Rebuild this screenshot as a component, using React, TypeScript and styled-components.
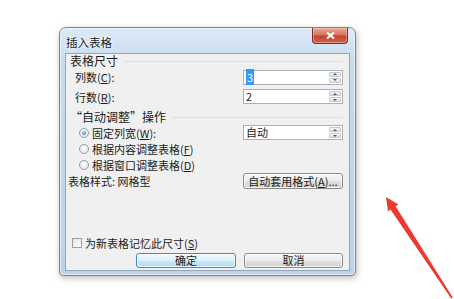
import React, { FC, ReactNode } from "react";
import styled, { createGlobalStyle } from "styled-components";

const GlobalStyle = createGlobalStyle`
  html, body {
    margin: 0;
    background: #fff;
  }
  body {
    font-family: "Noto Sans CJK SC", "Liberation Sans", sans-serif;
    font-size: 11px;
    color: #1c1c1c;
  }
`;

const Page = styled.div`
  position: relative;
  width: 454px;
  height: 299px;
  box-sizing: border-box;
  padding: 27px 0 0 59px;
  overflow: hidden;
`;

const Window = styled.div`
  width: 297px;
  height: 249px;
  box-sizing: border-box;
  display: flex;
  flex-direction: column;
  padding: 0 5px 4px;
  border: 1px solid #71859a;
  border-radius: 7px 7px 4px 4px;
  background: linear-gradient(180deg, #dceaf6 0%, #c6dcee 14%, #bad3e9 100%);
  box-shadow: inset 0 0 0 1px rgba(255, 255, 255, 0.6), 1px 2px 6px rgba(0, 0, 0, 0.28);
`;

const TitleBar = styled.div`
  flex: none;
  height: 25px;
  display: flex;
  justify-content: space-between;
  align-items: flex-start;
`;

const Title = styled.span`
  margin: 7px 0 0 1px;
  font-size: 11.5px;
  line-height: 14px;
  color: #222;
  text-shadow: 0 0 5px #fff, 0 0 3px #fff;
`;

const CloseButton = styled.div`
  width: 36px;
  height: 16px;
  margin-right: 2px;
  box-sizing: border-box;
  display: flex;
  align-items: center;
  justify-content: center;
  border: 1px solid #6e3028;
  border-top: none;
  border-radius: 0 0 4px 4px;
  background: linear-gradient(180deg, #e9a896 0%, #d7735f 45%, #c2452f 55%, #d2624a 100%);
  box-shadow: inset 0 0 0 1px rgba(255, 220, 200, 0.45);
`;

const Client = styled.div`
  flex: 1;
  display: flex;
  flex-direction: column;
  background: #f0f0f0;
  border: 1px solid #8fa8bf;
  padding: 1px 6px 2px 0;

  & > * {
    flex-shrink: 0;
  }
`;

const GroupTitle = styled.div<{ $mt?: number; $h?: number }>`
  display: flex;
  align-items: center;
  height: ${(p) => p.$h ?? 14}px;
  margin-top: ${(p) => p.$mt ?? 0}px;
  padding-left: 4px;
  font-size: 12px;
  line-height: 14px;
  white-space: nowrap;

  &::after {
    content: "";
    flex: 1;
    margin-left: 6px;
    border-top: 1px solid #d9e1e7;
  }
`;

const Row = styled.div<{ $mt?: number; $h?: number; $indent?: number }>`
  display: flex;
  align-items: center;
  justify-content: space-between;
  height: ${(p) => p.$h ?? 15}px;
  margin-top: ${(p) => p.$mt ?? 0}px;
  padding-left: ${(p) => p.$indent ?? 0}px;
  line-height: 14px;
  white-space: nowrap;
`;

const Label = styled.span`
  display: flex;
  align-items: center;
`;

const Acc = styled.span`
  text-decoration: underline;
`;

const Box = styled.div`
  width: 100px;
  height: 15px;
  box-sizing: border-box;
  display: flex;
  background: #fff;
  border: 1px solid #a9b0b8;
`;

const BoxText = styled.span`
  flex: 1;
  padding-left: 2px;
  line-height: 13px;
`;

const Selected = styled.span`
  background: #3399ff;
  color: #fff;
  padding: 0 1px;
`;

const Spin = styled.div`
  width: 12px;
  display: flex;
  flex-direction: column;
  gap: 1px;
  padding: 1px;
`;

const SpinHalf = styled.div<{ $down?: boolean }>`
  flex: 1;
  display: flex;
  align-items: center;
  justify-content: center;
  border: 1px solid #c4cad1;
  border-radius: 1px;
  background: linear-gradient(180deg, #f6f6f6, #dcdfe3);

  &::after {
    content: "";
    border-left: 2px solid transparent;
    border-right: 2px solid transparent;
    ${(p) => (p.$down ? "border-top: 2px solid #4d5966;" : "border-bottom: 2px solid #4d5966;")}
  }
`;

const Radio = styled.span<{ $checked?: boolean }>`
  width: 10px;
  height: 10px;
  box-sizing: border-box;
  margin-right: 3px;
  display: inline-flex;
  align-items: center;
  justify-content: center;
  border-radius: 50%;
  border: 1px solid #9a9fa6;
  background: radial-gradient(circle at 50% 40%, #ffffff, #dcdfe3);

  &::after {
    content: "";
    width: 4px;
    height: 4px;
    border-radius: 50%;
    background: ${(p) =>
      p.$checked ? "radial-gradient(circle at 40% 35%, #9ad8ff, #1f63b3)" : "transparent"};
  }
`;

const Check = styled.span`
  width: 10px;
  height: 10px;
  box-sizing: border-box;
  margin-right: 3px;
  border: 1px solid #9a9fa6;
  background: linear-gradient(135deg, #dfe2e6, #ffffff);
`;

const PushButton = styled.div<{ $w: number; $h?: number; $default?: boolean }>`
  width: ${(p) => p.$w}px;
  height: ${(p) => p.$h ?? 16}px;
  box-sizing: border-box;
  display: flex;
  align-items: center;
  justify-content: center;
  border: 1px solid ${(p) => (p.$default ? "#4c88b6" : "#8b8b8b")};
  border-radius: 3px;
  background: ${(p) =>
    p.$default
      ? "linear-gradient(180deg, #eef8fe 0%, #dff1fc 50%, #c9e8fa 51%, #b4dcf4 100%)"
      : "linear-gradient(180deg, #f5f5f5 0%, #ededed 50%, #e0e0e0 51%, #d4d4d4 100%)"};
  box-shadow: inset 0 0 0 1px rgba(255, 255, 255, 0.75);
  line-height: 13px;
`;

const Buttons = styled.div`
  display: flex;
  justify-content: flex-end;
  gap: 8px;
  height: 15px;
  margin-top: 3px;
`;

const Arrow = styled.svg`
  position: absolute;
  left: 0;
  top: 0;
  pointer-events: none;
`;

const SpinBox: FC<{ children: ReactNode }> = ({ children }) => (
  <Box>
    <BoxText>{children}</BoxText>
    <Spin>
      <SpinHalf />
      <SpinHalf $down />
    </Spin>
  </Box>
);

export default function App() {
  return (
    <>
      <GlobalStyle />
      <Page>
        <Window>
          <TitleBar>
            <Title>插入表格</Title>
            <CloseButton>
              <svg width="9" height="7" viewBox="0 0 9 7">
                <path d="M1 0.5 L8 6.5 M8 0.5 L1 6.5" stroke="#fff" strokeWidth="2" />
              </svg>
            </CloseButton>
          </TitleBar>
          <Client>
            <GroupTitle $h={12}>表格尺寸</GroupTitle>
            <Row $mt={2} $h={16} $indent={9}>
              <Label>
                列数(<Acc>C</Acc>):
              </Label>
              <SpinBox>
                <Selected>3</Selected>
              </SpinBox>
            </Row>
            <Row $mt={4} $indent={9}>
              <Label>
                行数(<Acc>R</Acc>):
              </Label>
              <SpinBox>2</SpinBox>
            </Row>
            <GroupTitle $mt={6}>“自动调整”操作</GroupTitle>
            <Row $mt={1} $indent={13}>
              <Label>
                <Radio $checked />
                固定列宽(<Acc>W</Acc>):
              </Label>
              <SpinBox>自动</SpinBox>
            </Row>
            <Row $mt={1} $h={16} $indent={13}>
              <Label>
                <Radio />
                根据内容调整表格(<Acc>F</Acc>)
              </Label>
            </Row>
            <Row $h={16} $indent={13}>
              <Label>
                <Radio />
                根据窗口调整表格(<Acc>D</Acc>)
              </Label>
            </Row>
            <Row $h={16} $indent={2}>
              <Label>表格样式: 网格型</Label>
              <PushButton $w={100}>
                自动套用格式(<Acc>A</Acc>)...
              </PushButton>
            </Row>
            <Row $mt={47} $h={14} $indent={6}>
              <Label>
                <Check />
                为新表格记忆此尺寸(<Acc>S</Acc>)
              </Label>
            </Row>
            <Buttons>
              <PushButton $w={100} $h={15} $default>
                确定
              </PushButton>
              <PushButton $w={99} $h={15}>
                取消
              </PushButton>
            </Buttons>
          </Client>
        </Window>
        <Arrow width="454" height="299" viewBox="0 0 454 299">
          <polygon
            points="386,197 398.5,204.5 395.6,206.3 452.8,297.6 451.2,298.6 390.5,209.6 388,211.5"
            fill="#ec3a2f"
          />
        </Arrow>
      </Page>
    </>
  );
}
